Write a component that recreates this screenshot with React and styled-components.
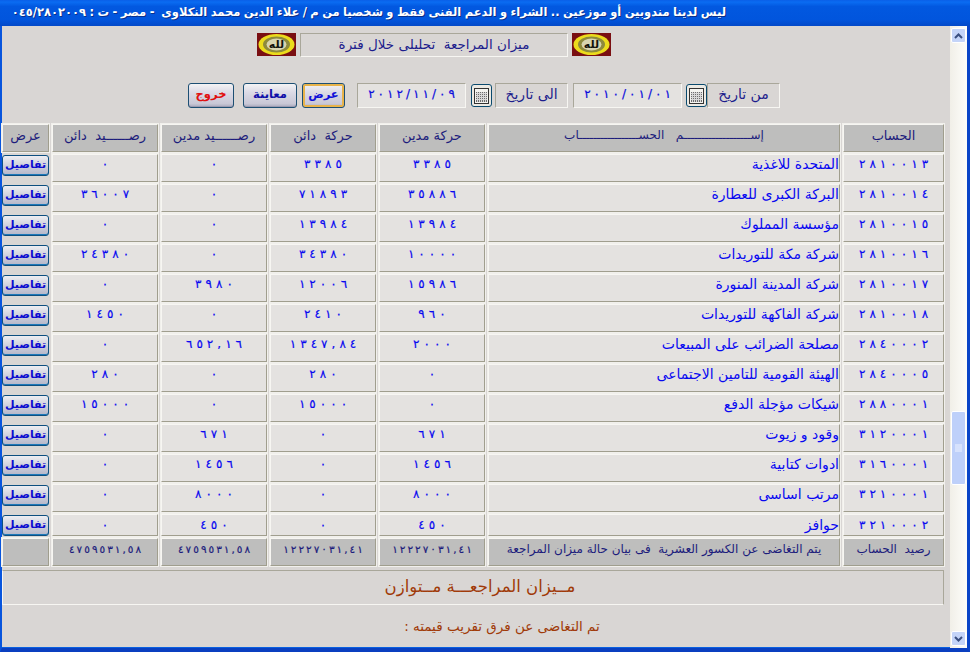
import React from "react";
import styled, { createGlobalStyle } from "styled-components";

const GlobalStyle = createGlobalStyle`
  html, body { margin: 0; padding: 0; background: #d9d6d4; }
  body { font-family: "DejaVu Sans", "Noto Sans", sans-serif; overflow: hidden; }
`;

const Window = styled.div`
  width: 970px;
  height: 652px;
  display: flex;
  flex-direction: column;
  overflow: hidden;
  box-sizing: border-box;
  background: #d9d6d4;
`;

const TitleBar = styled.div`
  height: 26px;
  flex: none;
  box-sizing: border-box;
  padding: 0 244px 2px 0;
  display: flex;
  align-items: center;
  justify-content: flex-start;
  background: linear-gradient(#0a5fe8 0, #0a6cf2 8%, #0258e0 25%, #0155dd 75%, #0349c8 100%);
  color: #fff;
  font-size: 11.5px;
  font-weight: 700;
  word-spacing: -0.6px;
  white-space: pre;
  text-shadow: 1px 1px 0 #0a2f8a;
`;

const Frame = styled.div`
  flex: 1;
  display: flex;
  min-height: 0;
  border-left: 2px solid #0855dd;
  border-right: 3px solid #0a45c8;
  border-bottom: 4px solid #0a3fc0;
  box-shadow: inset 0 -1px 0 #0a60e0;
`;

const Content = styled.main`
  flex: 1;
  min-width: 0;
  display: flex;
  flex-direction: column;
  padding: 6px 5px 0 0;
`;

const TitleRow = styled.div`
  display: flex;
  justify-content: center;
  align-items: center;
  gap: 4px;
  height: 25px;
  padding-right: 79px;
`;

const TitleBox = styled.div`
  width: 268px;
  height: 24px;
  box-sizing: border-box;
  padding-bottom: 2px;
  display: flex;
  align-items: center;
  justify-content: center;
  border: 1px solid;
  border-color: #a9a79a #f7f6f2 #f7f6f2 #a9a79a;
  color: #1c1c8c;
  font-size: 13.5px;
  white-space: pre;
`;

const ToolRow = styled.div`
  display: flex;
  direction: rtl;
  align-items: center;
  height: 27px;
  margin-top: 25px;
  padding-right: 165px;
`;

const Label = styled.div`
  width: ${(p) => p.$w}px;
  height: 25px;
  box-sizing: border-box;
  padding-bottom: 3px;
  margin-right: ${(p) => p.$gap || 0}px;
  display: flex;
  align-items: center;
  justify-content: center;
  background: ${(p) => (p.$date ? "#e4e2e0" : "#d9d6d4")};
  border: 1px solid;
  border-color: #a9a79a #f7f6f2 #f7f6f2 #a9a79a;
  color: ${(p) => (p.$date ? "#0c0cdc" : "#1c1c8c")};
  font-size: ${(p) => (p.$date ? 12 : 14)}px;
`;

const CalButton = styled.button`
  width: 21px;
  height: 23px;
  margin-right: ${(p) => p.$gap || 0}px;
  padding: 0;
  display: flex;
  align-items: center;
  justify-content: center;
  border: 1px solid #0a4a6e;
  border-radius: 3px;
  background: #eceae4;
`;

const Btn = styled.button`
  width: ${(p) => p.$w}px;
  height: 25px;
  margin-right: ${(p) => p.$gap || 0}px;
  padding: 0 0 3px;
  border: 1px solid #1d4f73;
  border-radius: 3px;
  background: linear-gradient(#f4f3f4, #dcdbe6 35%, #c9c8d6 85%, #a9a9bc);
  box-shadow: ${(p) =>
    p.$active ? "inset 0 0 0 2px #e8b34a" : "inset 0 -1px 0 #9a9ab0"};
  font-family: inherit;
  font-size: 11.5px;
  font-weight: 700;
  color: ${(p) => p.$color};
`;

const Table = styled.div`
  display: grid;
  direction: rtl;
  grid-template-columns: 101px 352px repeat(4, 106px) 47px;
  grid-template-rows: repeat(13, 28px) 22px 28px;
  column-gap: 3px;
  row-gap: 2px;
  width: 942px;
  margin-top: 15px;
`;

const Cell = styled.div`
  box-sizing: border-box;
  padding-bottom: ${(p) => (p.$short ? 1 : p.$head ? 6 : 8)}px;
  display: flex;
  align-items: center;
  justify-content: ${(p) => (p.$start ? "flex-start" : "center")};
  background: ${(p) => (p.$head ? "#bebebd" : "#e4e2e0")};
  border: 1px solid;
  border-color: #f7f6f2 #a09e8e #a09e8e #f7f6f2;
  outline: 1px solid #f1f0ec;
  color: ${(p) => (p.$head ? "#1c1c7c" : "#0808f0")};
  font-size: ${(p) => p.$size || 14}px;
  white-space: pre;
  overflow: hidden;
`;

const DigitRow = styled.span`
  display: inline-flex;
  direction: ltr;
  gap: ${(p) => p.$gap}px;
  -webkit-text-stroke: 0.2px currentColor;
`;

const BtnCell = styled.div`
  display: flex;
  align-items: flex-start;
  justify-content: center;
  padding-top: 1px;
`;

const DetailButton = styled.button`
  width: 47px;
  height: 21px;
  padding: 0 0 3px;
  border: 1px solid #0d4f80;
  border-radius: 3px;
  background: linear-gradient(#eeeef2, #cfd0dc 50%, #b4b6c8);
  box-shadow: inset 0 -1px 0 #1d78b8;
  font-family: inherit;
  font-size: 11px;
  font-weight: 700;
  color: #0c0cd0;
`;

const Status = styled.div`
  width: 942px;
  height: 35px;
  box-sizing: border-box;
  margin-top: 4px;
  padding: 0 0 3px 14px;
  display: flex;
  align-items: center;
  justify-content: center;
  border: 1px solid;
  border-color: #a9a79a #a9a79a #f7f6f2 #f7f6f2;
  color: #a03a08;
  font-size: 16.5px;
  white-space: pre;
`;

const Note = styled.div`
  direction: rtl;
  text-align: center;
  width: 942px;
  box-sizing: border-box;
  margin-top: 13px;
  padding-left: 58px;
  color: #a03a08;
  font-size: 13.5px;
`;

const ScrollBar = styled.div`
  width: 17px;
  flex: none;
  box-sizing: border-box;
  display: flex;
  flex-direction: column;
  padding: 2px 0 2px 1px;
  background: linear-gradient(90deg, #f1efe8, #fdfdfa);
`;

const ScrollArrow = styled.div`
  width: 15px;
  height: 15px;
  border: 1px solid #fff;
  box-sizing: border-box;
  border-radius: 2px;
  background: #c4d4f8;
  display: flex;
  align-items: center;
  justify-content: center;
`;

const Thumb = styled.div`
  width: 15px;
  height: 74px;
  box-sizing: border-box;
  margin-top: ${(p) => p.$top}px;
  margin-bottom: auto;
  border: 1px solid #fff;
  border-radius: 2px;
  background: #bed0fa;
  display: flex;
  align-items: center;
  justify-content: center;
`;

const LogoTile = () => (
  <svg width="39" height="23" viewBox="0 0 39 23">
    <rect width="39" height="23" fill="#7a0f12" />
    <ellipse cx="19.5" cy="11.5" rx="18" ry="10.5" fill="#ecdc1c" />
    <ellipse cx="19.5" cy="11.5" rx="13.5" ry="8" fill="#8e8a3c" />
    <ellipse cx="19.5" cy="11.5" rx="10" ry="6" fill="#d8d4b0" />
    <text x="19.5" y="15" fontSize="11" fontWeight="700" textAnchor="middle" fill="#14140c" fontFamily="DejaVu Sans">لله</text>
  </svg>
);

const CalIcon = () => (
  <svg width="15" height="16" viewBox="0 0 15 16">
    <rect x="0.5" y="0.5" width="14" height="15" fill="#f4f4f0" stroke="#333" />
    <rect x="2" y="4" width="11" height="10" fill="#6e6e6e" />
    <path d="M2 5.5h11M2 7.5h11M2 9.5h11M2 11.5h11M3.5 4v10M5.5 4v10M7.5 4v10M9.5 4v10M11.5 4v10" stroke="#d8d8d8" />
  </svg>
);

const Chevron = ({ up }) => (
  <svg width="9" height="6" viewBox="0 0 9 6">
    <path d={up ? "M1 5l3.5-3.5L8 5" : "M1 1l3.5 3.5L8 1"} fill="none" stroke="#3a4f80" strokeWidth="2" />
  </svg>
);

// letter-spacing has no effect on arabic digits, so each digit gets its own box
const Digits = ({ text, gap = 4 }) => (
  <DigitRow $gap={gap}>
    {[...text].map((d, i) => (
      <span key={i}>{d}</span>
    ))}
  </DigitRow>
);

const rows = [
  ["٢٨١٠٠١٣", "المتحدة للاغذية", "٣٣٨٥", "٣٣٨٥", "٠", "٠"],
  ["٢٨١٠٠١٤", "البركة الكبرى للعطارة", "٣٥٨٨٦", "٧١٨٩٣", "٠", "٣٦٠٠٧"],
  ["٢٨١٠٠١٥", "مؤسسة المملوك", "١٣٩٨٤", "١٣٩٨٤", "٠", "٠"],
  ["٢٨١٠٠١٦", "شركة مكة للتوريدات", "١٠٠٠٠", "٣٤٣٨٠", "٠", "٢٤٣٨٠"],
  ["٢٨١٠٠١٧", "شركة المدينة المنورة", "١٥٩٨٦", "١٢٠٠٦", "٣٩٨٠", "٠"],
  ["٢٨١٠٠١٨", "شركة الفاكهة للتوريدات", "٩٦٠", "٢٤١٠", "٠", "١٤٥٠"],
  ["٢٨٤٠٠٠٢", "مصلحة الضرائب على المبيعات", "٢٠٠٠", "١٣٤٧,٨٤", "٦٥٢,١٦", "٠"],
  ["٢٨٤٠٠٠٥", "الهيئة القومية للتامين الاجتماعى", "٠", "٢٨٠", "٠", "٢٨٠"],
  ["٢٨٨٠٠٠١", "شيكات مؤجلة الدفع", "٠", "١٥٠٠٠", "٠", "١٥٠٠٠"],
  ["٣١٢٠٠٠١", "وقود و زيوت", "٦٧١", "٠", "٦٧١", "٠"],
  ["٣١٦٠٠٠١", "ادوات كتابية", "١٤٥٦", "٠", "١٤٥٦", "٠"],
  ["٣٢١٠٠٠١", "مرتب اساسى", "٨٠٠٠", "٠", "٨٠٠٠", "٠"],
  ["٣٢١٠٠٠٢", "حوافز", "٤٥٠", "٠", "٤٥٠", "٠"],
];

const headers = [
  "الحساب",
  "إســـــــــــــــــــم   الحســـــــــــــــــاب",
  "حركة مدين",
  "حركة  دائن",
  "رصــــــيد مدين",
  "رصــــــيد  دائن",
  "عرض",
];

export default function App() {
  return (
    <Window>
      <GlobalStyle />
      <TitleBar dir="rtl">ليس لدينا مندوبين أو موزعين .. الشراء و الدعم الفنى فقط و شخصيا من م / علاء الدين محمد النكلاوى  - مصر - ت : ٠٤٥/٢٨٠٢٠٠٩</TitleBar>
      <Frame>
        <Content>
          <TitleRow>
            <LogoTile />
            <TitleBox dir="rtl">ميزان المراجعة  تحليلى خلال فترة</TitleBox>
            <LogoTile />
          </TitleRow>
          <ToolRow>
            <Label $w={73}>من تاريخ</Label>
            <CalButton><CalIcon /></CalButton>
            <Label $w={109} $date $gap={4}><Digits text="٢٠١٠/٠١/٠١" gap={3} /></Label>
            <Label $w={73} $gap={5}>الى تاريخ</Label>
            <CalButton $gap={3}><CalIcon /></CalButton>
            <Label $w={109} $date $gap={5}><Digits text="٢٠١٢/١١/٠٩" gap={3} /></Label>
            <Btn $w={43} $active $color="#1010d8" $gap={12}>عرض</Btn>
            <Btn $w={54} $color="#1010a8" $gap={5}>معاينة</Btn>
            <Btn $w={46} $color="#e01010" $gap={9}>خروج</Btn>
          </ToolRow>
          <Table>
            {headers.map((h, i) => (
              <Cell key={h} $head $size={i === 1 ? 12 : 13} dir="rtl">{h}</Cell>
            ))}
            {rows.map((r, i) => {
              const short = i === rows.length - 1;
              return (
                <React.Fragment key={r[0]}>
                  <Cell $short={short} $size={12}><Digits text={r[0]} /></Cell>
                  <Cell $short={short} $start>{r[1]}</Cell>
                  <Cell $short={short} $size={12}><Digits text={r[2]} /></Cell>
                  <Cell $short={short} $size={12}><Digits text={r[3]} /></Cell>
                  <Cell $short={short} $size={12}><Digits text={r[4]} /></Cell>
                  <Cell $short={short} $size={12}><Digits text={r[5]} /></Cell>
                  <BtnCell><DetailButton>تفاصيل</DetailButton></BtnCell>
                </React.Fragment>
              );
            })}
            <Cell $head $size={12}>رصيد  الحساب</Cell>
            <Cell $head $size={12}>يتم التغاضى عن الكسور العشرية  فى بيان حالة ميزان المراجعة</Cell>
            <Cell $head $size={10.5}><Digits text="١٢٢٢٧٠٣١,٤١" gap={2} /></Cell>
            <Cell $head $size={10.5}><Digits text="١٢٢٢٧٠٣١,٤١" gap={2} /></Cell>
            <Cell $head $size={10.5}><Digits text="٤٧٥٩٥٣١,٥٨" gap={2} /></Cell>
            <Cell $head $size={10.5}><Digits text="٤٧٥٩٥٣١,٥٨" gap={2} /></Cell>
            <Cell $head />
          </Table>
          <Status dir="rtl">مــيزان المراجعـــة مــتوازن</Status>
          <Note>تم التغاضى عن فرق تقريب قيمته :</Note>
        </Content>
        <ScrollBar>
          <ScrollArrow><Chevron up /></ScrollArrow>
          <Thumb $top={368}>
            <svg width="7" height="8" viewBox="0 0 7 8"><path d="M0 1h7M0 3h7M0 5h7M0 7h7" stroke="#eef3ff" /></svg>
          </Thumb>
          <ScrollArrow><Chevron /></ScrollArrow>
        </ScrollBar>
      </Frame>
    </Window>
  );
}
